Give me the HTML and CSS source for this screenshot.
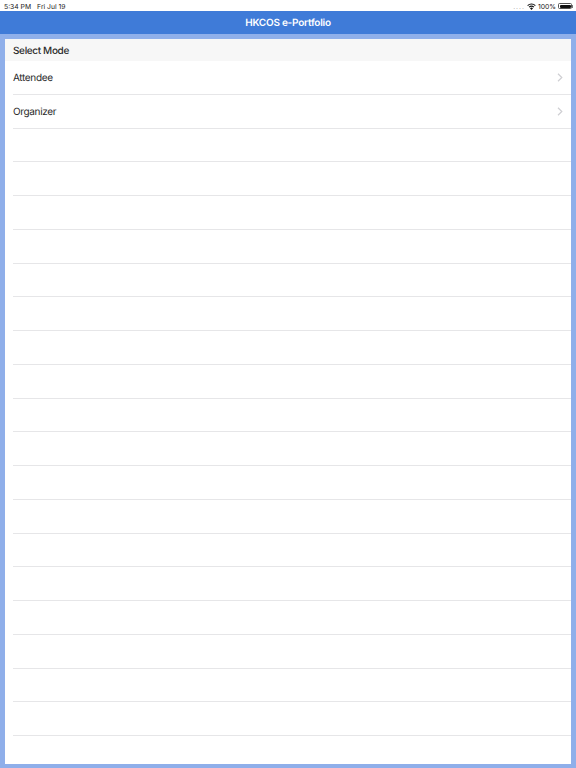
FILE: index.html
```html
<!DOCTYPE html>
<html lang="en">
<head>
    <meta charset="UTF-8">
    <meta name="viewport" content="width=device-width, initial-scale=1.0">
    <title>HKCOS e-Portfolio</title>
    <link rel="stylesheet" href="styles.css">
</head>
<body>
    <div class="status-bar">
        <div class="status-left">
            <span>5:34 PM</span>
            <span>Fri Jul 19</span>
        </div>
        <div class="status-right">
            <span class="signal-dots">....</span>
            <svg class="wifi" width="9" height="7" viewBox="0 0 20 15">
                <path d="M10 15 L6.6 11.2 A5 5 0 0 1 13.4 11.2 Z" fill="#111"/>
                <path d="M4.6 9 A8 8 0 0 1 15.4 9" fill="none" stroke="#111" stroke-width="2.4"/>
                <path d="M1.4 5.4 A12.6 12.6 0 0 1 18.6 5.4" fill="none" stroke="#111" stroke-width="2.4"/>
            </svg>
            <span>100%</span>
            <div class="battery"><div class="battery-fill"></div></div>
            <div class="battery-tip"></div>
        </div>
    </div>

    <div class="nav-bar">HKCOS e-Portfolio</div>

    <div class="content">
        <div class="card">
            <div class="section-title">Select Mode</div>
            <div class="row">
                <div class="row-inner">
                    <span>Attendee</span>
                    <svg class="chevron" width="6" height="9" viewBox="0 0 6 9"><path d="M1 .8 L4.8 4.5 L1 8.2" fill="none" stroke="#cfcfd3" stroke-width="1.2"/></svg>
                </div>
            </div>
            <div class="row">
                <div class="row-inner">
                    <span>Organizer</span>
                    <svg class="chevron" width="6" height="9" viewBox="0 0 6 9"><path d="M1 .8 L4.8 4.5 L1 8.2" fill="none" stroke="#cfcfd3" stroke-width="1.2"/></svg>
                </div>
            </div>
            <div class="row"><div class="row-inner"></div></div>
            <div class="row"><div class="row-inner"></div></div>
            <div class="row"><div class="row-inner"></div></div>
            <div class="row"><div class="row-inner"></div></div>
            <div class="row"><div class="row-inner"></div></div>
            <div class="row"><div class="row-inner"></div></div>
            <div class="row"><div class="row-inner"></div></div>
            <div class="row"><div class="row-inner"></div></div>
            <div class="row"><div class="row-inner"></div></div>
            <div class="row"><div class="row-inner"></div></div>
            <div class="row"><div class="row-inner"></div></div>
            <div class="row"><div class="row-inner"></div></div>
            <div class="row"><div class="row-inner"></div></div>
            <div class="row"><div class="row-inner"></div></div>
            <div class="row"><div class="row-inner"></div></div>
            <div class="row"><div class="row-inner"></div></div>
            <div class="row"><div class="row-inner"></div></div>
            <div class="row"><div class="row-inner"></div></div>
            <div class="row"><div class="row-inner"></div></div>
        </div>
    </div>
</body>
</html>
```

FILE: styles.css
```css
html, body {
    height: 100%;
}

body {
    margin: 0;
    display: flex;
    flex-direction: column;
    height: 768px;
    overflow: hidden;
    font-family: 'Inter', 'Liberation Sans', sans-serif;
    text-rendering: geometricPrecision;
    background-color: #8fafea;
    color: #2a2a2a;
}

.status-bar {
    height: 11px;
    flex-shrink: 0;
    display: flex;
    align-items: center;
    justify-content: space-between;
    padding: 1px 3px 0 4px;
    box-sizing: border-box;
    background: #fff;
    font-size: 6.8px;
    color: #222;
}

.status-left {
    display: flex;
    gap: 6px;
}

.status-right {
    display: flex;
    align-items: center;
    gap: 2px;
}

.signal-dots {
    color: #888;
    letter-spacing: 1px;
}

.battery {
    width: 14px;
    height: 6px;
    border: 0.5px solid #555;
    border-radius: 1.5px;
    padding: 0.5px;
    box-sizing: border-box;
}

.battery-fill {
    height: 100%;
    background: #111;
    border-radius: 1px;
}

.battery-tip {
    width: 1px;
    height: 3px;
    background: #777;
    margin-left: -2px;
}

.nav-bar {
    height: 23px;
    flex-shrink: 0;
    display: flex;
    align-items: center;
    justify-content: center;
    padding-top: 1px;
    box-sizing: border-box;
    background-color: #3f7bd8;
    color: #fff;
    font-size: 10px;
    font-weight: 600;
    letter-spacing: -0.24px;
}

.content {
    flex-grow: 1;
    padding: 5px 5px 4px 5px;
    min-height: 0;
}

.card {
    height: 100%;
    background: #fff;
    overflow: hidden;
}

.section-title {
    height: 22px;
    display: flex;
    align-items: center;
    padding-left: 8px;
    padding-top: 1px;
    box-sizing: border-box;
    background: #f7f7f7;
    font-size: 10px;
    font-weight: 500;
    letter-spacing: -0.35px;
}

.row {
    height: 33.75px;
    padding-left: 8px;
    box-sizing: border-box;
}

.row-inner {
    height: 100%;
    box-sizing: border-box;
    display: flex;
    align-items: center;
    justify-content: space-between;
    padding-top: 1px;
    padding-right: 8px;
    border-bottom: 1px solid #e6e6e8;
    font-size: 10px;
    letter-spacing: -0.35px;
}
```
